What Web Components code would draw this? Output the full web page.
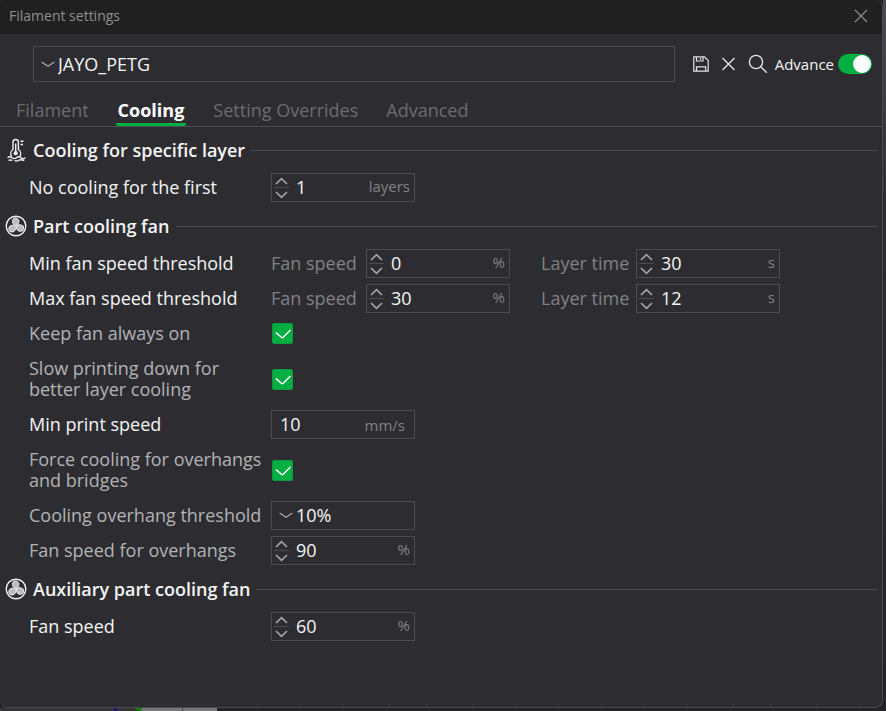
<!DOCTYPE html>
<html lang="en">
<head>
<meta charset="utf-8">
<title>Filament settings</title>
<style>
html, body { margin: 0; height: 100%; }
body {
  --bg: #2d2d31; --line: #4c4c55; --text: #f4f4f5; --muted: #818183; --green: #00ae42;
  font-family: "Open Sans", "Noto Sans", sans-serif; font-size: 18px; line-height: 21px; color: var(--text);
  background: #232328;
}
</style>
</head>
<body>
<settings-app></settings-app>
<script>
const CHEVRON = '<svg width="14" height="7" viewBox="0 0 14 7" fill="none" stroke="#a8a8aa" stroke-width="1.3" aria-hidden="true"><path d="M.6 1 7 5.2 13.4 1"/></svg>';
const BASE = `<style>
*{box-sizing:border-box}
input,button,select{font:inherit;color:inherit;background:none;border:0;margin:0;padding:0;border-radius:0;outline:0;appearance:none;-webkit-appearance:none}
svg{display:block;flex:none}
</style>`;

function define(name, html, setup) {
  const t = document.createElement('template');
  t.innerHTML = BASE + html;
  customElements.define(name, class extends HTMLElement {
    connectedCallback() {
      if (this.shadowRoot) return;
      this.attachShadow({ mode: 'open' }).append(t.content.cloneNode(true));
      if (setup) setup(this, this.shadowRoot);
    }
  });
}

define('number-field', `<style>
:host{display:flex;align-items:center;width:144px;height:29px;border:1px solid var(--line);padding:0 4px 0 8px;box-sizing:border-box;color:var(--text)}
:host([spin]){padding-left:2px}
.steps{display:none;flex-direction:column;width:15px;margin-right:7px}
:host([spin]) .steps{display:flex}
.steps button{height:13px;display:grid;place-items:center}
.steps button + button{border-top:1px solid var(--line);height:14px}
input{flex:1;min-width:0;width:0;height:27px;padding-bottom:1px}
span{font-size:15px;color:var(--muted);padding-bottom:2px}
:host(:not([spin])) span{padding:1px 5px 0 0}
</style>
<div class="steps">
<button aria-label="Increase"><svg width="13" height="8" viewBox="0 0 13 8" fill="none" stroke="#a4a4a6" stroke-width="1.7"><path d="M1 7 6.5 1.7 12 7"/></svg></button>
<button aria-label="Decrease"><svg width="13" height="8" viewBox="0 0 13 8" fill="none" stroke="#a4a4a6" stroke-width="1.7"><path d="M1 1 6.5 6.3 12 1"/></svg></button>
</div><input type="text" inputmode="numeric"><span></span>`, (h, r) => {
  const i = r.querySelector('input');
  i.value = h.getAttribute('value');
  i.setAttribute('aria-label', h.getAttribute('label'));
  r.querySelector('span').textContent = h.getAttribute('unit');
  const step = d => () => { i.value = Math.max(0, Number(i.value) + d); };
  const [up, down] = r.querySelectorAll('button');
  up.onclick = step(1); down.onclick = step(-1);
});

define('drop-down', `<style>
:host{display:grid;align-items:center;width:144px;height:29px;border:1px solid var(--line);box-sizing:border-box}
:host([large]){width:auto;height:36px}
select,svg{grid-area:1/1}
svg{margin-left:7px;pointer-events:none}
select{width:100%;height:100%;padding-left:24px}
</style>${CHEVRON}<select><option></option></select>`, (h, r) => {
  r.querySelector('option').textContent = h.getAttribute('value');
  r.querySelector('select').setAttribute('aria-label', h.getAttribute('label'));
});

define('check-box', `<style>
:host{display:grid;width:21px;height:21px;margin-left:1px}
input,svg{grid-area:1/1}
input{width:21px;height:21px;border:1px solid #8a8a8c;border-radius:2px}
input:checked{background:var(--green);border-color:#0b9a40}
svg{pointer-events:none;visibility:hidden}
input:checked + svg{visibility:visible}
</style><input type="checkbox" checked><svg width="21" height="21" viewBox="0 0 21 21" fill="none" stroke="#fff" stroke-width="1.5"><path d="m4 9.6 5.4 4.7a1.4 1.4 0 0 0 1.8 0L18.400 7"/></svg>`, (h, r) => {
  r.querySelector('input').setAttribute('aria-label', h.getAttribute('label'));
});

define('setting-row', `<style>
:host{display:grid;grid-template-columns:242px 1fr;align-items:center;min-height:29px;padding-left:29px;margin-bottom:6px}
:host([tall]){min-height:50px}
:host([soft]) .label{color:#b2b3b5}
.fields{display:flex;align-items:center;gap:31px}
</style><div class="label"></div><div class="fields"><slot></slot></div>`, (h, r) => {
  r.querySelector('.label').textContent = h.getAttribute('label');
});

define('sub-field', `<style>
:host{display:grid;grid-template-columns:95px auto;align-items:center;color:var(--muted)}
</style><span></span><slot></slot>`, (h, r) => {
  r.querySelector('span').textContent = h.getAttribute('label');
});

const BLADE = 'd="M11 11.200C8.400 10 6.800 7.200 7.600 4.900 8.500 2.700 11.600 2.300 13.200 4.200 14.700 6.200 13.600 9.600 11 11.200Z"';
define('settings-section', `<style>
:host{display:block;margin-bottom:8px}
header{display:flex;align-items:center;height:32px;padding:0 5px;margin-bottom:7px}
h2{margin:0 6px;font-size:18px;line-height:21px;font-weight:600}
i{flex:1;height:1px;background:var(--line)}
svg{display:none}
:host([icon=fan]) .fan,:host([icon=temp]) .temp{display:block}
</style>
<header>
<svg class="fan" width="22" height="22" viewBox="0 0 22 22" fill="none" stroke="#efeff0" stroke-width="1.4" aria-hidden="true"><circle cx="11" cy="11" r="9.800"/>
<g fill="#bcbcbe" stroke-width=".9"><path ${BLADE}/><path transform="rotate(120 11 11)" ${BLADE}/><path transform="rotate(240 11 11)" ${BLADE}/></g></svg>
<svg class="temp" width="22" height="24" viewBox="0 0 22 24" fill="none" stroke="#efeff0" stroke-width="1.400" aria-hidden="true"><path d="M6.500 18.300A5 5 0 0 1 8 11.500V4.200a2.700 2.700 0 0 1 5.400 0v7.300a5 5 0 0 1 1.500 6.800M10.700 5.500v9M15.500 3.200h3M15.500 6.500h2.500"/><circle cx="10.700" cy="15.200" r="2.100" fill="#efeff0" stroke="none"/><path d="M2.500 19.700c1.500-1.200 3-1.200 4.500 0s3 1.200 4.500 0 3-1.200 4.500 0 3 1.200 4.500 0M3.500 22.500c1.400-.8 2.500-.8 3.800 0M9.500 22.500c1.300.7 2.500.7 3.800 0 1.400-.8 4.200-.8 6 0"/></svg>
<h2></h2><i></i></header><slot></slot>`, (h, r) => {
  r.querySelector('h2').textContent = h.getAttribute('label');
});

define('title-bar', `<style>
:host{display:flex;align-items:center;justify-content:space-between;height:34px;padding:0 14px 3px 9px;background:#202020;color:#8f8f8f;font-size:14px;box-sizing:border-box}
h1{margin:0;font-size:inherit;font-weight:400}
</style><h1>Filament settings</h1><button aria-label="Close"><svg width="14" height="14" viewBox="0 0 14 14" stroke="#8f8f8f" stroke-width="1.100"><path d="m1 1 12 12M13 1 1 13"/></svg></button>`);

define('tool-bar', `<style>
:host{display:flex;align-items:center;padding:12px 10px 0 33px}
drop-down{flex:1;margin-right:18px}
button{margin-right:12px}
button:last-of-type{margin-right:7px}
label{display:flex;align-items:center;font-size:15px;gap:4px}
label input{width:34px;height:20px;border-radius:10px;background:#66666a;padding:1px;display:flex}
label input::before{content:"";width:18px;height:18px;border-radius:50%;background:#fff}
label input:checked{background:var(--green);justify-content:flex-end}
</style>
<drop-down large value="JAYO_PETG" label="Filament preset"></drop-down>
<button aria-label="Save"><svg width="16" height="16" viewBox="0 0 16 16" fill="none" stroke="#e4e4e5" stroke-width="1.200"><path d="M.8 .8h10.700L15.200 4.500v10.700H.8ZM3.500 15v-4.200h9.200V15M3.500 1v4h6.500V1M7.500 2v1.800"/></svg></button>
<button aria-label="Delete"><svg width="15" height="14" viewBox="0 0 15 14" stroke="#e4e4e5" stroke-width="1.300"><path d="m1.500 1 12 12M13.500 1l-12 12"/></svg></button>
<button aria-label="Search"><svg width="20" height="20" viewBox="0 0 20 20" fill="none" stroke="#e4e4e5" stroke-width="1.300"><circle cx="8" cy="8" r="6.600"/><path d="m12.800 12.800 6 6"/></svg></button>
<label>Advance<input type="checkbox" role="switch" checked></label>`);

define('tab-strip', `<style>
:host{display:flex;align-items:stretch;gap:26px;height:45px;padding-left:15px;border-bottom:1px solid var(--line);box-sizing:border-box}
button{color:#6b6b6e;padding:12px 1px 0;white-space:nowrap}
button[aria-selected=true]{color:#fff;font-weight:700;padding:12px 2px 0;background:linear-gradient(var(--green),var(--green)) bottom/100% 3px no-repeat;border-radius:0 0 2px 2px}
</style>
<button role="tab">Filament</button><button role="tab" aria-selected="true">Cooling</button><button role="tab">Setting Overrides</button><button role="tab">Advanced</button>`, h => h.setAttribute('role', 'tablist'));

define('settings-window', `<style>
:host{display:flex;flex-direction:column;min-width:0;background:var(--bg);border:solid #4a4a4e;border-width:0 1px 1px 0;border-radius:8px;overflow:hidden}
main{flex:1;padding-top:7px}
</style>
<title-bar></title-bar><tool-bar></tool-bar><tab-strip></tab-strip>
<main>
<settings-section icon="temp" label="Cooling for specific layer">
<setting-row label="No cooling for the first"><number-field spin value="1" unit="layers" label="No cooling for the first"></number-field></setting-row>
</settings-section>
<settings-section icon="fan" label="Part cooling fan">
<setting-row label="Min fan speed threshold"><sub-field label="Fan speed"><number-field spin value="0" unit="%" label="Min fan speed"></number-field></sub-field><sub-field label="Layer time"><number-field spin value="30" unit="s" label="Min layer time"></number-field></sub-field></setting-row>
<setting-row label="Max fan speed threshold"><sub-field label="Fan speed"><number-field spin value="30" unit="%" label="Max fan speed"></number-field></sub-field><sub-field label="Layer time"><number-field spin value="12" unit="s" label="Max layer time"></number-field></sub-field></setting-row>
<setting-row soft label="Keep fan always on"><check-box label="Keep fan always on"></check-box></setting-row>
<setting-row soft tall label="Slow printing down for better layer cooling"><check-box label="Slow printing down for better layer cooling"></check-box></setting-row>
<setting-row label="Min print speed"><number-field value="10" unit="mm/s" label="Min print speed"></number-field></setting-row>
<setting-row soft tall label="Force cooling for overhangs and bridges"><check-box label="Force cooling for overhangs and bridges"></check-box></setting-row>
<setting-row soft label="Cooling overhang threshold"><drop-down value="10%" label="Cooling overhang threshold"></drop-down></setting-row>
<setting-row soft label="Fan speed for overhangs"><number-field spin value="90" unit="%" label="Fan speed for overhangs"></number-field></setting-row>
</settings-section>
<settings-section icon="fan" label="Auxiliary part cooling fan">
<setting-row label="Fan speed"><number-field spin value="60" unit="%" label="Fan speed"></number-field></setting-row>
</settings-section>
</main>`);

define('settings-app', `<style>
:host{display:grid;grid-template:1fr 3px / 1fr 3px;min-height:100vh}
.side{background:linear-gradient(#4a4a50,#2c2c31 200px,#232328)}
.under{grid-column:1/3;display:flex;background:repeating-linear-gradient(90deg,#232328 0 42px,#303036 42px 43px)}
.under svg{width:220px;height:3px}
</style>
<settings-window></settings-window><div class="side"></div>
<div class="under"><svg viewBox="0 0 220 3" aria-hidden="true"><path fill="#36363a" d="M0 0h141v3H0z"/><path fill="#0808a0" d="M115 0h1l1 3h-3z"/><path fill="#0a860a" d="M135 0h9l-3 3h-3z"/><path fill="#777" d="M142 0h75v3h-76z"/><path fill="#444" d="M182 0h1v3h-1z"/></svg></div>`);
</script>
</body>
</html>
